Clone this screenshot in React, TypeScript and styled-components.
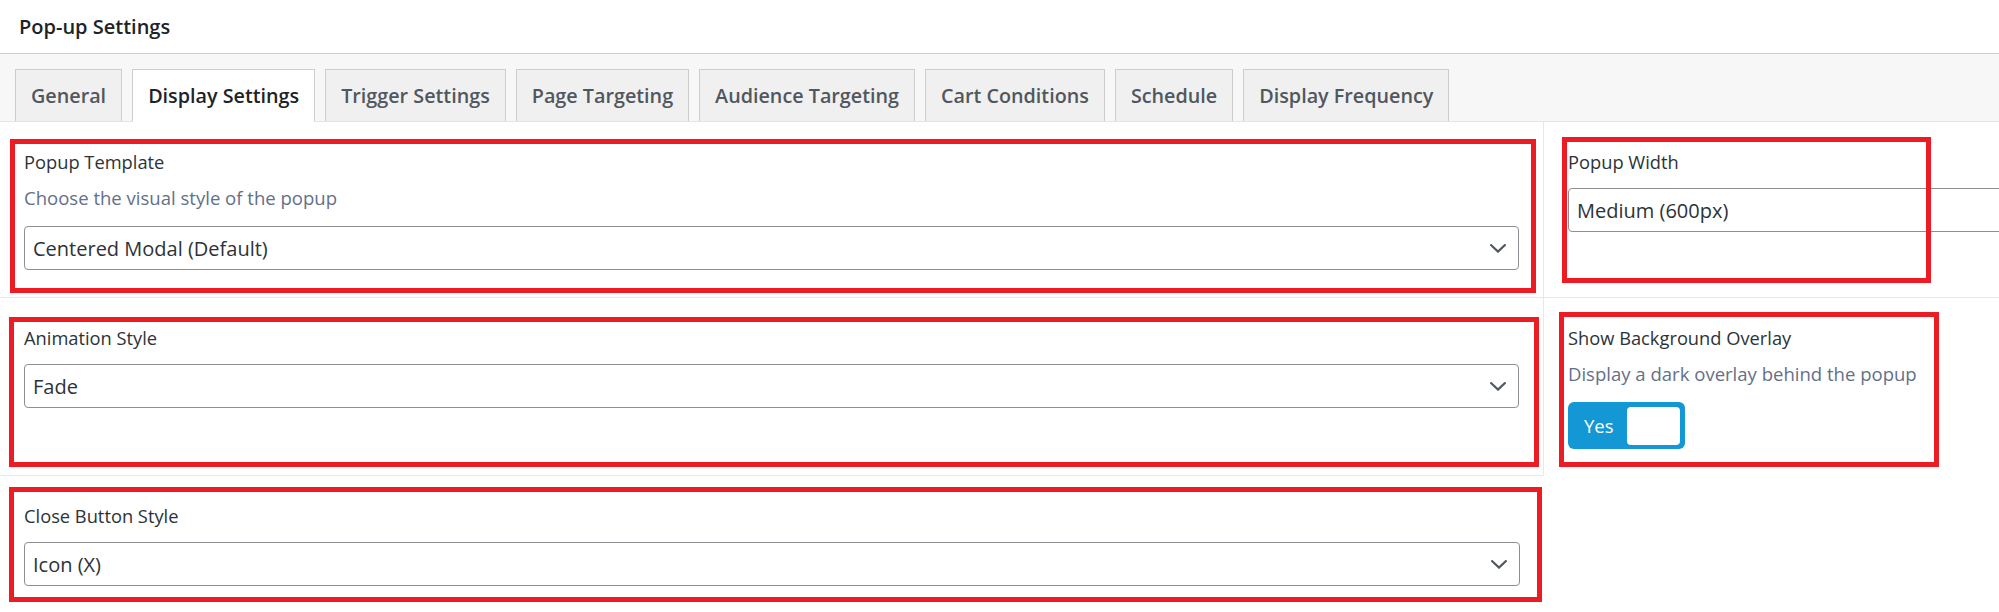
import React from "react";
import styled, { createGlobalStyle } from "styled-components";

const GlobalStyle = createGlobalStyle`
  html, body {
    margin: 0;
    padding: 0;
    background: #ffffff;
  }
  body {
    font-family: "Open Sans", "Noto Sans", "Liberation Sans", sans-serif;
    overflow: hidden;
  }
  *, *::before, *::after {
    box-sizing: border-box;
  }
`;

const Page = styled.div`
  width: 1999px;
  height: 612px;
  overflow: hidden;
  background: #ffffff;
`;

const Header = styled.header`
  height: 54px;
  display: flex;
  align-items: center;
  padding-left: 19px;
  border-bottom: 1px solid #cfcfcf;
`;

const Title = styled.h1`
  margin: 0;
  font-size: 20px;
  font-weight: 600;
  color: #1d2327;
`;

const TabBar = styled.nav`
  display: flex;
  align-items: flex-end;
  gap: 10px;
  padding: 15px 0 0 15px;
  background: #f7f7f7;
  border-bottom: 1px solid #e4e4e4;
`;

const Tab = styled.div<{ $active?: boolean }>`
  height: ${(p) => (p.$active ? 53 : 52)}px;
  margin-bottom: ${(p) => (p.$active ? -1 : 0)}px;
  padding: 0 15px;
  display: flex;
  align-items: center;
  border: 1px solid #cdcdcd;
  border-bottom: ${(p) => (p.$active ? "1px solid #ffffff" : "none")};
  background: ${(p) => (p.$active ? "#ffffff" : "#f0f0f0")};
  color: ${(p) => (p.$active ? "#1d2327" : "#50575e")};
  font-size: 19.75px;
  font-weight: 600;
  white-space: nowrap;
`;

const Grid = styled.div`
  display: grid;
  grid-template-columns: 1544px 1fr;
`;

const Cell = styled.div<{ $lineRight?: boolean; $lineBottom?: boolean }>`
  position: relative;
  min-width: 0;
  padding: 28px 24px 27px 24px;
  border-right: ${(p) => (p.$lineRight ? "1px solid #e8e8e8" : "none")};
  border-bottom: ${(p) => (p.$lineBottom ? "1px solid #e8e8e8" : "none")};
`;

const Highlight = styled.span<{ $top: number; $left: number; $w: number; $h: number }>`
  position: absolute;
  top: ${(p) => p.$top}px;
  left: ${(p) => p.$left}px;
  width: ${(p) => p.$w}px;
  height: ${(p) => p.$h}px;
  border: 5px solid #ed1c24;
  pointer-events: none;
  z-index: 2;
`;

const Label = styled.div`
  font-size: 18.3px;
  line-height: 24px;
  color: #2c3338;
  margin-bottom: 14px;
  white-space: nowrap;
`;

const Description = styled.p`
  margin: -2px 0 16px;
  font-size: 18.55px;
  line-height: 24px;
  color: #647088;
  white-space: nowrap;
`;

const SelectBox = styled.div<{ $wide?: boolean }>`
  width: ${(p) => (p.$wide ? "620px" : "100%")};
  height: 44px;
  display: flex;
  align-items: center;
  justify-content: space-between;
  padding: 0 12px 0 8px;
  border: 1px solid #8c8f94;
  border-radius: 4px;
  background: #ffffff;
  color: #2c3338;
  font-size: 20px;
`;

const Chevron = styled.svg`
  width: 16px;
  height: 9px;
  flex: none;
`;

const Toggle = styled.div`
  width: 117px;
  height: 47px;
  display: flex;
  align-items: center;
  justify-content: space-between;
  padding: 4px 5px 4px 16px;
  border-radius: 6px;
  background: #1497d5;
  color: #ffffff;
  font-size: 18.5px;
`;

const Knob = styled.span`
  width: 53px;
  height: 38px;
  border-radius: 4px;
  background: #ffffff;
`;

const tabs = [
  "General",
  "Display Settings",
  "Trigger Settings",
  "Page Targeting",
  "Audience Targeting",
  "Cart Conditions",
  "Schedule",
  "Display Frequency",
];

function Select({ value, wide }: { value: string; wide?: boolean }) {
  return (
    <SelectBox $wide={wide}>
      <span>{value}</span>
      <Chevron viewBox="0 0 16 9" fill="none">
        <path d="M1.2 1.2 L8 7.6 L14.8 1.2" stroke="#50575e" strokeWidth="2.2" strokeLinecap="square" />
      </Chevron>
    </SelectBox>
  );
}

export default function App() {
  return (
    <Page>
      <GlobalStyle />
      <Header>
        <Title>Pop-up Settings</Title>
      </Header>
      <TabBar>
        {tabs.map((t) => (
          <Tab key={t} $active={t === "Display Settings"}>
            {t}
          </Tab>
        ))}
      </TabBar>
      <Grid>
        <Cell $lineRight $lineBottom>
          <Highlight $top={17} $left={10} $w={1526} $h={154} />
          <Label>Popup Template</Label>
          <Description>Choose the visual style of the popup</Description>
          <Select value="Centered Modal (Default)" />
        </Cell>
        <Cell $lineBottom>
          <Highlight $top={15} $left={18} $w={369} $h={146} />
          <Label>Popup Width</Label>
          <Select value="Medium (600px)" wide />
        </Cell>
        <Cell $lineRight $lineBottom>
          <Highlight $top={19} $left={9} $w={1530} $h={150} />
          <Label>Animation Style</Label>
          <Select value="Fade" />
        </Cell>
        <Cell>
          <Highlight $top={14} $left={15} $w={380} $h={155} />
          <Label>Show Background Overlay</Label>
          <Description>Display a dark overlay behind the popup</Description>
          <Toggle>
            <span>Yes</span>
            <Knob />
          </Toggle>
        </Cell>
        <Cell>
          <Highlight $top={11} $left={9} $w={1533} $h={115} />
          <Label>Close Button Style</Label>
          <Select value="Icon (X)" />
        </Cell>
      </Grid>
    </Page>
  );
}
